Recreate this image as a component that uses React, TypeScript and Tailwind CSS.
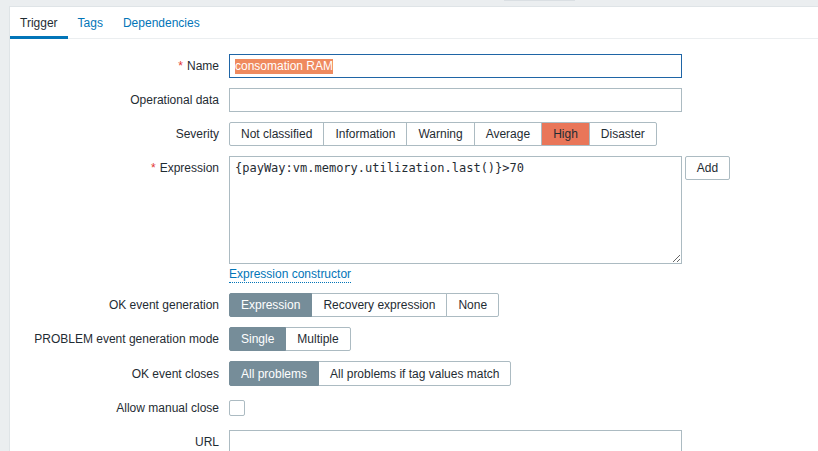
import React from "react";

const font = { fontFamily: '"Liberation Sans", Arial, sans-serif' };

function Label({ text, req, top }: { text: string; req?: boolean; top?: boolean }) {
  return (
    <div className={`flex justify-end ${top ? "items-start" : "items-center"} text-[12px] leading-[24px] text-[#1f2c33] whitespace-nowrap`}>
      {req && <span className="text-[#e33734] mr-[4px]">*</span>}
      {text}
    </div>
  );
}

function Radio({ items, active, activeClass }: { items: string[]; active: number; activeClass?: string }) {
  return (
    <div className="flex">
      {items.map((it, i) => {
        const on = i === active;
        const cls = on
          ? activeClass ?? "bg-[#768d99] border-[#768d99] text-white z-10"
          : "bg-white border-[#acbbc2] text-[#1f2c33]";
        return (
          <div
            key={it}
            className={`relative h-full flex items-center px-[11px] border text-[12px] whitespace-nowrap ${i > 0 ? "-ml-px" : ""} ${i === 0 ? "rounded-l-[2px]" : ""} ${i === items.length - 1 ? "rounded-r-[2px]" : ""} ${cls}`}
          >
            {it}
          </div>
        );
      })}
    </div>
  );
}

export default function App() {
  return (
    <div className="relative w-[818px] h-[451px] overflow-hidden bg-[#ebeef0]" style={font}>
      <div className="absolute left-[504px] top-0 w-[71px] h-px bg-[#dadfe3]" />
      <div className="pt-[6px] pl-[9px]">
        <div className="bg-white border-t border-l border-[#dfe4e7] min-h-[460px]">
          {/* Tabs */}
          <div className="flex h-[32px] border-b border-[#ebeef0]">
            <div className="h-[32px] px-[10px] flex items-center text-[12px] text-[#1f2c33] border-b-[3px] border-[#0275b8] pt-[2px] -mb-px">
              Trigger
            </div>
            <div className="h-[31px] px-[10px] flex items-center text-[12px] text-[#0275b8]">Tags</div>
            <div className="h-[31px] px-[10px] flex items-center text-[12px] text-[#0275b8]">Dependencies</div>
          </div>

          {/* Form */}
          <div className="grid grid-cols-[209px_1fr] gap-x-[10px] gap-y-[10px] pt-[15px]">
            <Label text="Name" req />
            <div className="w-[453px] h-[24px] border border-[#1f65a6] flex items-center px-[5px] text-[12px]">
              <span className="bg-[#ef8a5e] text-white leading-[15px]">consomation RAM</span>
            </div>

            <Label text="Operational data" />
            <div className="w-[453px] h-[24px] border border-[#acbbc2]" />

            <Label text="Severity" />
            <div className="h-[24px] flex">
              <Radio
                items={["Not classified", "Information", "Warning", "Average", "High", "Disaster"]}
                active={4}
                activeClass="bg-[#e97659] border-[#acbbc2] text-[#1f2c33]"
              />
            </div>

            <Label text="Expression" req top />
            <div className="flex flex-col items-start">
              <div className="flex items-start">
                <textarea
                  readOnly
                  defaultValue="{payWay:vm.memory.utilization.last()}>70"
                  className="w-[453px] h-[108px] border border-[#acbbc2] px-[5px] py-[3px] text-[12px] leading-[16px] text-[#1f2c33] outline-none"
                  style={{ fontFamily: '"DejaVu Sans Mono", monospace' }}
                />
                <div className="ml-[3px] w-[45px] h-[24px] border border-[#acbbc2] rounded-[2px] flex items-center justify-center text-[12px] text-[#1f2c33] bg-white">
                  Add
                </div>
              </div>
              <div className="mt-[3px] text-[12px] leading-[15px] text-[#0275b8] border-b border-dotted border-[#0275b8]">
                Expression constructor
              </div>
            </div>

            <Label text="OK event generation" />
            <div className="h-[24px] flex">
              <Radio items={["Expression", "Recovery expression", "None"]} active={0} />
            </div>

            <Label text="PROBLEM event generation mode" />
            <div className="h-[24px] flex">
              <Radio items={["Single", "Multiple"]} active={0} />
            </div>

            <Label text="OK event closes" />
            <div className="h-[25px] flex">
              <Radio items={["All problems", "All problems if tag values match"]} active={0} />
            </div>

            <Label text="Allow manual close" />
            <div className="h-[24px] flex items-center">
              <div className="w-[16px] h-[16px] border border-[#acbbc2] rounded-[2px] bg-white" />
            </div>

            <Label text="URL" />
            <div className="w-[453px] h-[24px] border border-[#acbbc2]" />
          </div>
        </div>
      </div>
    </div>
  );
}
